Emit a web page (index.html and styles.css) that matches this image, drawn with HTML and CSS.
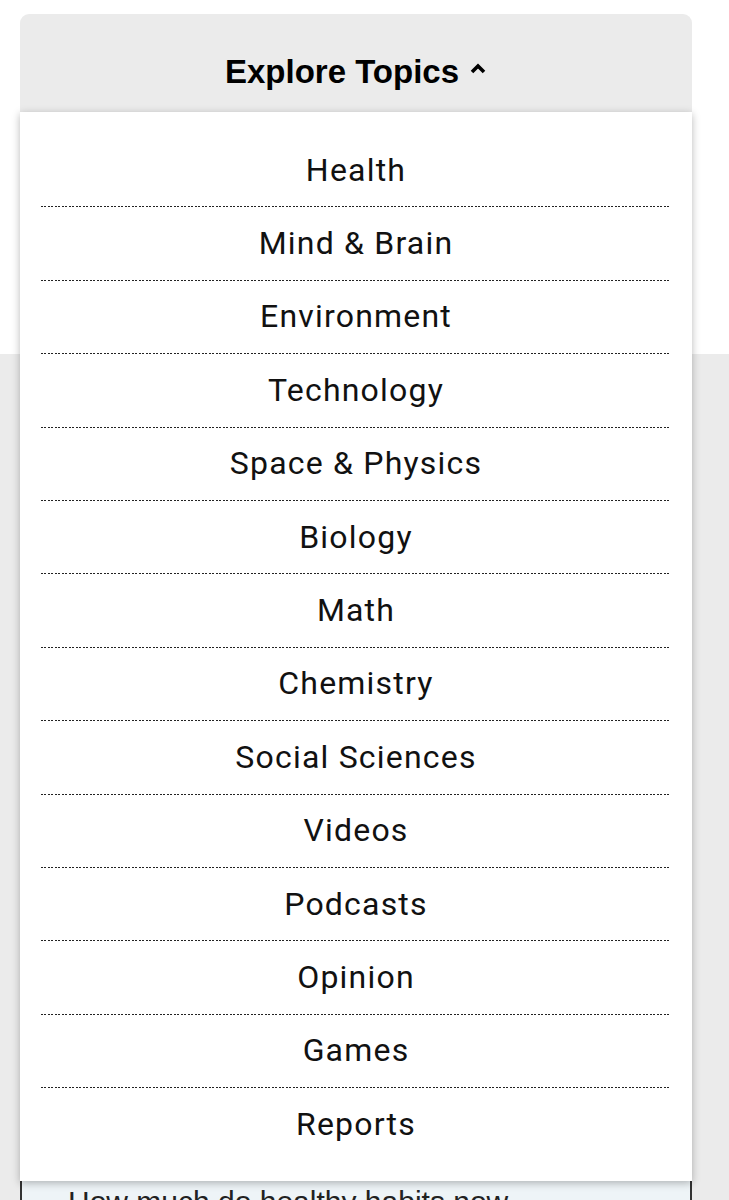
FILE: index.html
```html
<!DOCTYPE html>
<html lang="en">
<head>
    <meta charset="UTF-8">
    <meta name="viewport" content="width=device-width, initial-scale=1.0">
    <title>Explore Topics</title>
    <link rel="stylesheet" href="styles.css">
</head>
<body>
    <div class="topbar">
        <div class="explore">
            <div class="explore-toggle">
                Explore Topics
                <svg class="caret" width="18" height="14" viewBox="0 0 18 14">
                    <path d="M3 11 L9 5 L15 11" fill="none" stroke="#000" stroke-width="3.6"/>
                </svg>
            </div>
            <ul class="topics-menu">
                <li><a href="#">Health</a></li>
                <li><a href="#">Mind &amp; Brain</a></li>
                <li><a href="#">Environment</a></li>
                <li><a href="#">Technology</a></li>
                <li><a href="#">Space &amp; Physics</a></li>
                <li><a href="#">Biology</a></li>
                <li><a href="#">Math</a></li>
                <li><a href="#">Chemistry</a></li>
                <li><a href="#">Social Sciences</a></li>
                <li><a href="#">Videos</a></li>
                <li><a href="#">Podcasts</a></li>
                <li><a href="#">Opinion</a></li>
                <li><a href="#">Games</a></li>
                <li><a href="#">Reports</a></li>
            </ul>
        </div>
    </div>
    <div class="feature">
        <div class="story-card">
            <p>How much do healthy habits now matter later?</p>
        </div>
    </div>
</body>
</html>
```

FILE: styles.css
```css
body {
    font-family: Roboto, "Liberation Sans", sans-serif;
    margin: 0;
    padding: 0;
    background: #fff;
    color: #000;
    overflow: hidden;
    height: 1200px;
}
.topbar {
    height: 354px;
    padding: 14px 37px 0 20px;
    box-sizing: border-box;
}
.explore {
    position: relative;
}
.explore-toggle {
    height: 98px;
    background: #ebebeb;
    border-radius: 9px 9px 0 0;
    display: flex;
    align-items: center;
    justify-content: center;
    gap: 10px;
    font-family: "Liberation Sans", Arial, sans-serif;
    font-weight: bold;
    font-size: 33px;
    padding-top: 18px;
    box-sizing: border-box;
}
.caret {
    margin-top: -8px;
}
.topics-menu {
    position: absolute;
    top: 98px;
    left: 0;
    right: 0;
    margin: 0;
    padding: 21px 21px;
    list-style: none;
    background: #fff;
    box-shadow: 0 2px 8px rgba(0, 0, 0, 0.28);
    z-index: 2;
}
.topics-menu li {
    height: 73.4px;
    display: flex;
    align-items: center;
    justify-content: center;
}
.topics-menu li + li {
    background: repeating-linear-gradient(to right, #222 0 1.6px, transparent 1.6px 3.5px) top left / 100% 1px no-repeat;
}
.topics-menu a {
    color: #111;
    text-decoration: none;
    font-size: 32px;
    letter-spacing: 1.2px;
}
.feature {
    background: #ebebeb;
    height: 846px;
    padding: 814px 37px 0 20px;
    box-sizing: border-box;
}
.story-card {
    background: #eef4f7;
    border-left: 2px solid #333;
    border-right: 2px solid #333;
    height: 60px;
}
.story-card p {
    margin: 0;
    max-width: 470px;
    padding: 14px 0 0 46px;
    font-family: "Liberation Sans", Arial, sans-serif;
    font-size: 30px;
    line-height: 1.3;
    color: #222;
}
```
